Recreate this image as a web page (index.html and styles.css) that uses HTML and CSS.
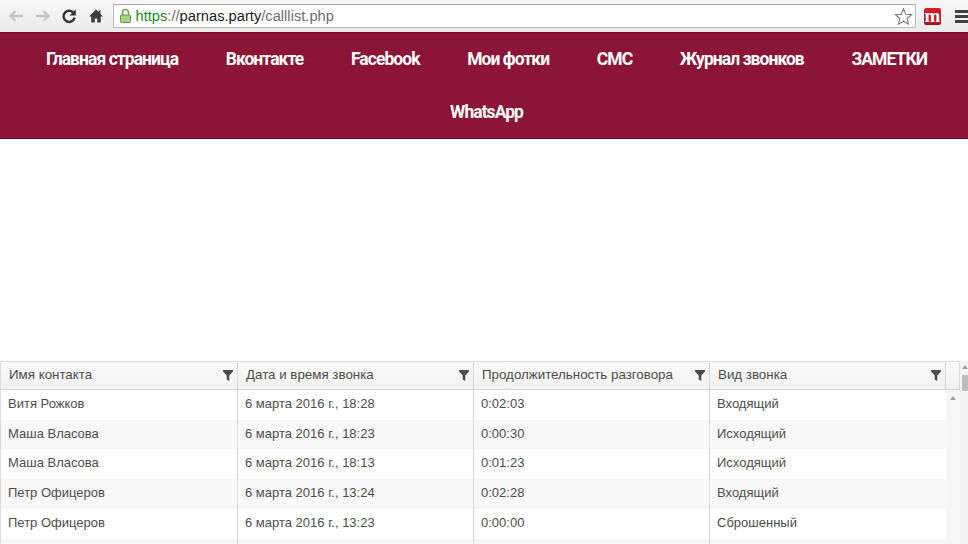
FILE: index.html
```html
<!DOCTYPE html>
<html lang="en">
<head>
    <meta charset="UTF-8">
    <meta name="viewport" content="width=device-width, initial-scale=1.0">
    <title>Журнал звонков</title>
    <link rel="stylesheet" href="styles.css">
</head>
<body>
    <div class="toolbar">
        <svg class="tool-icon" width="16" height="16" viewBox="0 0 16 16"><path d="M15 8H3M7.500 3 2.500 8l5 5" fill="none" stroke="#c4c7c9" stroke-width="2.400"/></svg>
        <svg class="tool-icon" width="16" height="16" viewBox="0 0 16 16"><path d="M1 8h12M8.500 3l5 5-5 5" fill="none" stroke="#c4c7c9" stroke-width="2.400"/></svg>
        <svg class="tool-icon" width="16" height="16" viewBox="0 0 16 16"><path d="M13 5.500A5.600 5.600 0 1 0 13.600 9.500" fill="none" stroke="#34373a" stroke-width="2.500"/><path d="M14.800 1.200v6.300H8.500z" fill="#34373a"/></svg>
        <svg class="tool-icon" width="16" height="16" viewBox="0 0 16 16"><path d="M8 1.500 1 8.500h2.200V14.500h3.600V10.500h2.400v4h3.600V8.500H15l-2.500-2.500V2.500h-2v1.500z" fill="#3c3f42"/></svg>
        <div class="address">
            <svg class="lock" width="13" height="16" viewBox="0 0 13 16"><path d="M3.500 7V4.500a3 3 0 0 1 6 0V7" fill="none" stroke="#69a84f" stroke-width="1.600"/><rect x="1.500" y="7" width="10" height="7.500" rx="1" fill="#a5d57f" stroke="#5f9e45"/></svg>
            <span class="scheme">https</span><span class="url-gray">://</span><span class="host">parnas.party</span><span class="url-gray">/calllist.php</span>
            <svg class="star" width="19" height="19" viewBox="0 0 19 19"><path d="M9.500 1.800 11.800 7.200 17.600 7.700 13.200 11.500 14.500 17.200 9.500 14.200 4.500 17.200 5.800 11.500 1.400 7.700 7.200 7.200z" fill="#fff" stroke="#77797b" stroke-width="1.100"/></svg>
        </div>
        <div class="ext-badge">m</div>
        <div class="menu-icon"><span></span><span></span><span></span></div>
    </div>

    <nav class="site-nav">
        <a href="#">Главная страница</a>
        <a href="#">Вконтакте</a>
        <a href="#">Facebook</a>
        <a href="#">Мои фотки</a>
        <a href="#">СМС</a>
        <a href="#">Журнал звонков</a>
        <a href="#">ЗАМЕТКИ</a>
        <a href="#">WhatsApp</a>
    </nav>

    <div class="grid">
        <div class="grid-head">
            <div class="head-cell">Имя контакта<svg class="filter" width="10" height="11" viewBox="0 0 10 11"><path d="M0 0h10v1.500L6.300 5.500V11L3.700 9.500v-4L0 1.500z"/></svg></div>
            <div class="head-cell">Дата и время звонка<svg class="filter" width="10" height="11" viewBox="0 0 10 11"><path d="M0 0h10v1.500L6.300 5.500V11L3.700 9.500v-4L0 1.500z"/></svg></div>
            <div class="head-cell">Продолжительность разговора<svg class="filter" width="10" height="11" viewBox="0 0 10 11"><path d="M0 0h10v1.500L6.300 5.500V11L3.700 9.500v-4L0 1.500z"/></svg></div>
            <div class="head-cell">Вид звонка<svg class="filter" width="10" height="11" viewBox="0 0 10 11"><path d="M0 0h10v1.500L6.300 5.500V11L3.700 9.500v-4L0 1.500z"/></svg></div>
            <div class="head-end"></div>
        </div>
        <div class="grid-body">
            <div class="rows">
                <div class="row"><div>Витя Рожков</div><div>6 марта 2016 г., 18:28</div><div>0:02:03</div><div>Входящий</div></div>
                <div class="row"><div>Маша Власова</div><div>6 марта 2016 г., 18:23</div><div>0:00:30</div><div>Исходящий</div></div>
                <div class="row"><div>Маша Власова</div><div>6 марта 2016 г., 18:13</div><div>0:01:23</div><div>Исходящий</div></div>
                <div class="row"><div>Петр Офицеров</div><div>6 марта 2016 г., 13:24</div><div>0:02:28</div><div>Входящий</div></div>
                <div class="row"><div>Петр Офицеров</div><div>6 марта 2016 г., 13:23</div><div>0:00:00</div><div>Сброшенный</div></div>
                <div class="row row-cut"><div></div><div></div><div></div><div></div></div>
            </div>
            <div class="inner-scroll"><span class="arrow-up"></span></div>
        </div>
    </div>
    <div class="page-scroll"><span class="page-arrow"></span><span class="page-thumb"></span></div>
</body>
</html>
```

FILE: styles.css
```css
html, body {
    height: 100%;
    margin: 0;
    padding: 0;
    overflow: hidden;
    background: #fff;
    font-family: "Liberation Sans", Arial, sans-serif;
}

.toolbar {
    height: 32px;
    display: flex;
    align-items: center;
    padding: 0 0 0 8px;
    box-sizing: border-box;
    background: linear-gradient(#f7f7f7, #ebebeb);
}

.tool-icon {
    margin-right: 10.500px;
    flex-shrink: 0;
}

.address {
    flex-grow: 1;
    height: 24px;
    margin: 0 8px 0 -1.500px;
    padding: 0 2px 0 5px;
    display: flex;
    align-items: center;
    box-sizing: border-box;
    background: #fff;
    border: 1px solid #bdbdbd;
    border-top-color: #a9a9a9;
    font-size: 14.700px;
    color: #6d6f71;
}

.lock {
    margin-right: 4px;
}

.scheme {
    color: #1f8a1f;
}

.host {
    color: #1c1c1c;
}

.star {
    margin-left: auto;
}

.ext-badge {
    width: 17px;
    height: 17px;
    border-radius: 2px;
    background: linear-gradient(#d3222e, #a91222);
    color: #fff;
    font-family: "Liberation Serif", serif;
    font-weight: bold;
    font-size: 19px;
    line-height: 15px;
    text-align: center;
    margin-right: 14px;
}

.menu-icon {
    width: 13px;
    display: flex;
    flex-direction: column;
    gap: 2px;
}

.menu-icon span {
    height: 3px;
    background: #3f4144;
}

.site-nav {
    display: flex;
    flex-wrap: wrap;
    justify-content: center;
    padding-left: 5px;
    background: #8b1437;
    border-top: 1px solid #6f0f2c;
    border-bottom: 1px solid #6f0f2c;
    height: 107px;
    box-sizing: border-box;
}

.site-nav a {
    padding: 0 23.800px;
    line-height: 53px;
    color: #fff;
    text-decoration: none;
    font-family: Roboto, sans-serif;
    font-weight: 700;
    font-size: 17.500px;
    letter-spacing: -0.950px;
}

.grid {
    margin-top: 222px;
    width: 960px;
    height: 183px;
    overflow: hidden;
    display: flex;
    flex-direction: column;
    border-left: 1px solid #dcdcdc;
    box-sizing: border-box;
    font-size: 13px;
    color: #4d4d4d;
}

.grid-head {
    display: grid;
    flex-shrink: 0;
    grid-template-columns: 237px 236px 236px 236px 1fr;
    height: 28.750px;
    background: linear-gradient(#fafafa, #f1f1f1);
    border-top: 1px solid #dcdcdc;
    border-bottom: 1px solid #d4d4d4;
    border-right: 1px solid #dcdcdc;
    box-sizing: border-box;
    font-size: 13.330px;
}

.head-cell {
    display: flex;
    align-items: center;
    justify-content: space-between;
    padding: 0 4px 2px 8px;
    border-right: 1px solid #d4d4d4;
    white-space: nowrap;
}

.filter {
    fill: #4a4d52;
    margin-top: 2px;
}

.grid-body {
    display: flex;
    flex-grow: 1;
    min-height: 0;
}

.rows {
    width: 945px;
}

.row {
    display: grid;
    grid-template-columns: 237px 236px 236px 236px;
    height: 29.750px;
    line-height: 27.500px;
}

.row-cut {
    height: 5.500px;
}

.row:nth-child(even) {
    background: #f8f8f8;
}

.row div {
    padding-left: 7px;
    border-right: 1px solid #d8d8d8;
    white-space: nowrap;
}

.row div:last-child {
    border-right: 0;
}

.inner-scroll {
    flex-grow: 1;
    background: #f6f6f6;
    display: flex;
    justify-content: center;
    align-items: flex-start;
    padding-top: 6px;
    box-sizing: border-box;
}

.arrow-up {
    width: 0;
    height: 0;
    border: 3px solid transparent;
    border-top: 0;
    border-bottom: 4px solid #a0a0a0;
}

.page-scroll {
    position: absolute;
    top: 361px;
    right: 0;
    bottom: 0;
    width: 8px;
    background: #f4f4f4;
}

.page-arrow {
    display: block;
    width: 0;
    height: 0;
    margin: 4px 0 0 2px;
    border: 3px solid transparent;
    border-top: 0;
    border-bottom: 4px solid #a0a0a0;
}

.page-thumb {
    display: block;
    width: 6px;
    height: 16px;
    margin: 6px 0 0 2px;
    background: #bcbcbc;
}
```
